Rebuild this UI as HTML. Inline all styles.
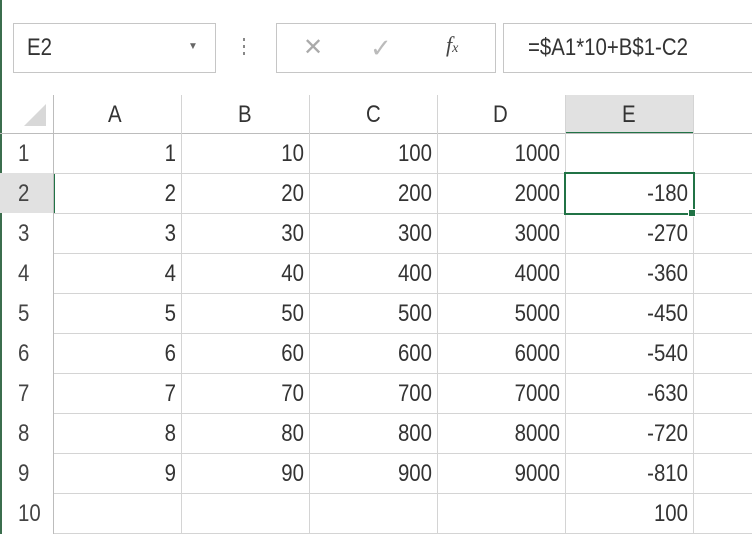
<html><head><style>
body{margin:0;width:752px;height:534px;background:#fff;overflow:hidden;position:relative;font-family:"Liberation Sans",sans-serif;color:#333}
.a{position:absolute}
.t{font-size:24px;transform:scaleX(.85);transform-origin:left}
.hl{position:absolute;left:53px;width:699px;height:1px;background:#d4d4d4}
.vl{position:absolute;top:95px;width:1px;height:439px;background:#d4d4d4}
.c{position:absolute;text-align:right;font-size:24px;width:120px;line-height:42px;transform:scaleX(.85);transform-origin:right}
.r{position:absolute;left:18px;font-size:24px;line-height:42px;color:#444;transform:scaleX(.85);transform-origin:left}
</style></head><body>
<div class="a" style="left:0;top:0;width:2px;height:534px;background:#3b6e4d"></div>
<div class="a" style="left:13px;top:23px;width:201px;height:48px;border:1px solid #c6c6c6"></div>
<div class="a t" style="left:27px;top:34px">E2</div>
<div class="a" style="left:188px;top:41px;font-size:10px;color:#666">▼</div>
<div class="a" style="left:243px;top:38px;width:2px;height:3px;background:#888;box-shadow:0 7px #888,0 14px #888"></div>
<div class="a" style="left:276px;top:23px;width:218px;height:48px;border:1px solid #c6c6c6"></div>
<div class="a" style="left:303px;top:33px;font-size:24px;color:#aaa">✕</div>
<div class="a" style="left:370px;top:33px;font-size:26px;color:#bbb">✓</div>
<div class="a" style="left:446px;top:32px;font-size:22px;font-style:italic;font-family:'Liberation Serif',serif;color:#444">f<span style="font-size:14px">x</span></div>
<div class="a" style="left:503px;top:23px;width:260px;height:48px;border:1px solid #c6c6c6"></div>
<div class="a t" style="left:528px;top:34px">=$A1*10+B$1-C2</div>
<div class="a" style="left:565px;top:95px;width:128px;height:37px;background:#e1e1e1;border-bottom:2px solid #217346"></div>
<div class="a" style="left:0;top:173px;width:53px;height:40px;background:#e1e1e1;border-right:2px solid #217346"></div>
<div class="a" style="left:24px;top:104px;width:0;height:0;border-left:22px solid transparent;border-bottom:22px solid #d8d8d8"></div>
<div class="hl" style="left:0;top:133px;width:752px;background:#bcbcbc"></div>
<div class="hl" style="top:173px"></div><div class="hl" style="top:213px"></div><div class="hl" style="top:253px"></div><div class="hl" style="top:293px"></div><div class="hl" style="top:333px"></div><div class="hl" style="top:373px"></div><div class="hl" style="top:413px"></div><div class="hl" style="top:453px"></div><div class="hl" style="top:493px"></div><div class="hl" style="top:533px"></div>
<div class="vl" style="left:53px;background:#bcbcbc"></div><div class="vl" style="left:181px"></div><div class="vl" style="left:309px"></div><div class="vl" style="left:437px"></div><div class="vl" style="left:565px"></div><div class="vl" style="left:693px"></div>
<div class="a t" style="left:108px;top:101px">A</div><div class="a t" style="left:238px;top:101px">B</div><div class="a t" style="left:366px;top:101px">C</div><div class="a t" style="left:493px;top:101px">D</div><div class="a t" style="left:622px;top:101px">E</div>
<div class="r" style="top:133px">1</div><div class="r" style="top:173px">2</div><div class="r" style="top:213px">3</div><div class="r" style="top:253px">4</div><div class="r" style="top:293px">5</div><div class="r" style="top:333px">6</div><div class="r" style="top:373px">7</div><div class="r" style="top:413px">8</div><div class="r" style="top:453px">9</div><div class="r" style="top:493px">10</div>
<div id="g"></div>
<div class="a" style="left:564px;top:172px;width:127px;height:39px;border:2px solid #217346"></div>
<div class="a" style="left:688px;top:209px;width:6px;height:6px;background:#217346;border:1px solid #fff"></div>
<script>
var g='';for(var i=1;i<=9;i++){var v=[i,i*10,i*100,i*1000,i==1?'':-(i*90)];for(var j=0;j<5;j++){g+='<div class="c" style="left:'+(53+128*j+3)+'px;top:'+(93+40*i)+'px">'+v[j]+'</div>';}}
g+='<div class="c" style="left:568px;top:493px">100</div>';
document.getElementById('g').innerHTML=g;
</script>
</body></html>
